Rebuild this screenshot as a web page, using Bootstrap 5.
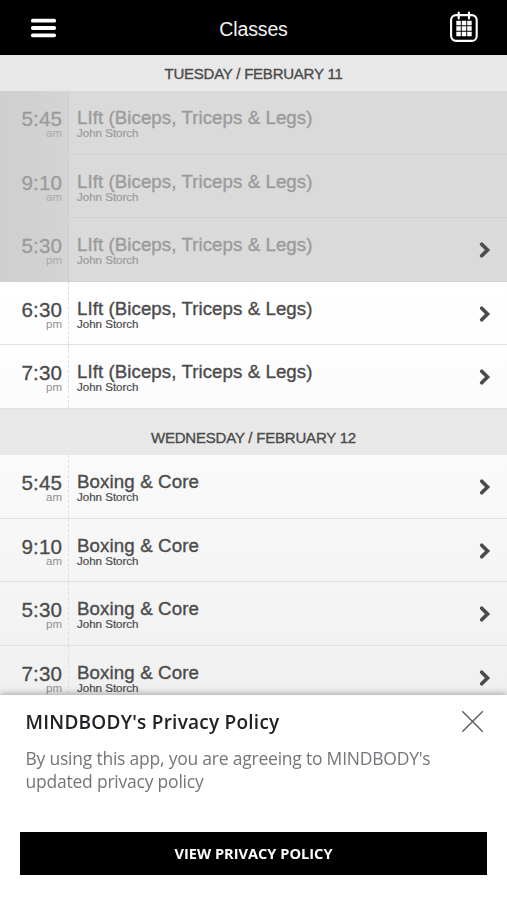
<!DOCTYPE html>
<html lang="en">
<head>
<meta charset="utf-8">
<meta name="viewport" content="width=device-width, initial-scale=1">
<title>Classes</title>
<link href="https://cdn.jsdelivr.net/npm/bootstrap@5.3.0/dist/css/bootstrap.min.css" rel="stylesheet">
<style>
body{font-family:"Liberation Sans",Arial,sans-serif;color:#4b4b4b;height:900px}
.topbar{height:54.5px;background:#000;color:#f4f4f4;padding:0 28px 0 30px}
.topbar-title{font-size:19.5px;line-height:24px;padding:3px 0 0 1px}
.menu-btn,.cal-btn{line-height:0}
.menu-btn{padding-top:1px}
.schedule{background:linear-gradient(#fff 225px,#fcfcfc 350px,#f8f8f8 450px,#f0f0f0 640px)}
.day-head{background:#e8e8e8;font-size:15px;line-height:18px;-webkit-text-stroke:.35px #4b4b4b}
.day-first{height:36.5px;padding-top:10.5px}
.day-next{height:46.5px;padding-top:20px}
.slot{height:63.5px;border-bottom:1.5px solid #e1e1e1}
.slot-past{background:#dadada;border-color:#d2d2d2;color:#9b9b9b}
.slot-time{width:69px;padding:19px 6px 0 0;border-right:1px dashed #dfdfdf}
.slot-past .slot-time{background:linear-gradient(90deg,#d0cecf,#d4d4d4);border-right-color:transparent;margin-bottom:-1.5px}
.clock{font-size:20.6px;line-height:18px;-webkit-text-stroke:.3px}
.clock .fit{display:inline-block;vertical-align:top}
.half{font-size:11.5px;line-height:11px}
.half span{display:inline-block;vertical-align:top;color:#8f8f8f}
.slot-past .half span{color:#a9a9a9}
.slot-info{padding:18px 0 0 8px}
.slot-name{font-size:18.7px;line-height:18px;-webkit-text-stroke:.35px}
.slot-name .fit,.coach .fit{display:inline-block;vertical-align:top}
.coach{font-size:11.6px;line-height:12px;-webkit-text-stroke:.2px}
.go{padding:2px 16px 0 0;color:#4b4b4b}
.sheet{height:205px;background:#fff;box-shadow:0 -1px 7px rgba(0,0,0,.34);font-family:"Open Sans",sans-serif;padding:14px 20px 25px 20px}
.sheet-title{font-size:19px;line-height:26px;font-weight:600;color:#202124;padding-left:5.5px}
.sheet-text{font-size:17.5px;line-height:23px;color:#73767a;padding-left:5.5px;margin-top:12px}
.policy-btn{height:43.5px;background:#000;color:#fff;font-size:14.6px;font-weight:700;border-radius:0;padding:8px 0 6px}
.close-btn{margin-right:3.5px}
</style>
<script src="https://cdn.jsdelivr.net/npm/bootstrap@5.3.0/dist/js/bootstrap.bundle.min.js"></script>
</head>
<body class="overflow-hidden">
<svg class="d-none"><symbol id="chev" viewBox="0 0 12 18"><path d="M2.7 3.2 8.5 9l-5.8 5.8" fill="none" stroke="currentColor" stroke-width="3.7" stroke-linecap="round"/></symbol></svg>
<header class="topbar d-flex align-items-center justify-content-between">
  <a href="#" class="menu-btn" aria-label="Menu"><svg width="27" height="20" viewBox="0 0 27 20" stroke="#fff" stroke-width="3.8" stroke-linecap="round"><path d="M2.8 2.7h21.4M2.8 10h21.4M2.8 17.3h21.4"/></svg></a>
  <div class="topbar-title"><span class="fit" data-w="68.5">Classes</span></div>
  <a href="#" class="cal-btn" aria-label="Calendar"><svg width="30" height="32" viewBox="0 0 30 32" fill="none" stroke="#fff"><rect x="2.1" y="4.1" width="25.6" height="25.8" rx="5" stroke-width="2.1"/><path d="M9.7 1.5v6M20 1.5v6" stroke-width="2.2" stroke-linecap="round"/><path d="M7.3 12.1h15.4M7.3 17.6h15.4M7.3 23.1h15.4" stroke-width="4.5" stroke-dasharray="4.5 .95"/></svg></a>
</header>
<main class="schedule" id="schedule">
</main>
<section class="sheet fixed-bottom d-flex flex-column">
  <div class="d-flex justify-content-between">
    <div class="sheet-title"><span class="fit" data-w="254">MINDBODY's Privacy Policy</span></div>
    <a href="#" aria-label="Close" class="close-btn lh-1"><svg width="24" height="24" viewBox="0 0 24 24" stroke="#55585c" stroke-width="1.3"><path d="m2.3 2.3 20.5 20.5M22.8 2.3 2.3 22.8"/></svg></a>
  </div>
  <div class="sheet-text"><span class="fit" data-w="405">By using this app, you are agreeing to MINDBODY's</span><br><span class="fit" data-w="178">updated privacy policy</span></div>
  <a href="#" class="policy-btn btn w-100 mt-auto d-flex align-items-center justify-content-center"><span class="fit" data-w="158">VIEW PRIVACY POLICY</span></a>
</section>
<script>
const lift = 'LIft (Biceps, Triceps &amp; Legs)', box = 'Boxing &amp; Core';
const days = [
  {head:'TUESDAY / FEBRUARY 11', cls:'day-first', w:178, name:lift, nw:235.5,
   slots:[['5:45','am',1,0],['9:10','am',1,0],['5:30','pm',1,1],['6:30','pm',0,1],['7:30','pm',0,1]]},
  {head:'WEDNESDAY / FEBRUARY 12', cls:'day-next', w:205, name:box, nw:122,
   slots:[['5:45','am',0,1],['9:10','am',0,1],['5:30','pm',0,1],['7:30','pm',0,1]]}
];
document.getElementById('schedule').innerHTML = days.map(d =>
  `<h2 class="day-head ${d.cls} text-center m-0"><span class="fit" data-w="${d.w}">${d.head}</span></h2>` +
  d.slots.map(([t,h,past,go]) => `<div class="slot d-flex ${past?'slot-past':''}">
    <div class="slot-time text-end flex-shrink-0"><div class="clock"><span class="fit" data-w="40.5">${t}</span></div><div class="half"><span>${h}</span></div></div>
    <div class="slot-info flex-grow-1"><div class="slot-name"><span class="fit" data-w="${d.nw}">${d.name}</span></div><div class="coach"><span class="fit" data-w="61.5">John Storch</span></div></div>
    ${go?'<div class="go d-flex align-items-center"><svg width="12" height="18"><use href="#chev"/></svg></div>':''}
  </div>`).join('')).join('');
// Even out letter spacing so each label fills its intended measure.
document.querySelectorAll('.fit').forEach(e => {
  const gap = (+e.dataset.w - e.getBoundingClientRect().width) / e.textContent.length;
  e.style.letterSpacing = gap.toFixed(3) + 'px';
});
</script>
</body>
</html>
